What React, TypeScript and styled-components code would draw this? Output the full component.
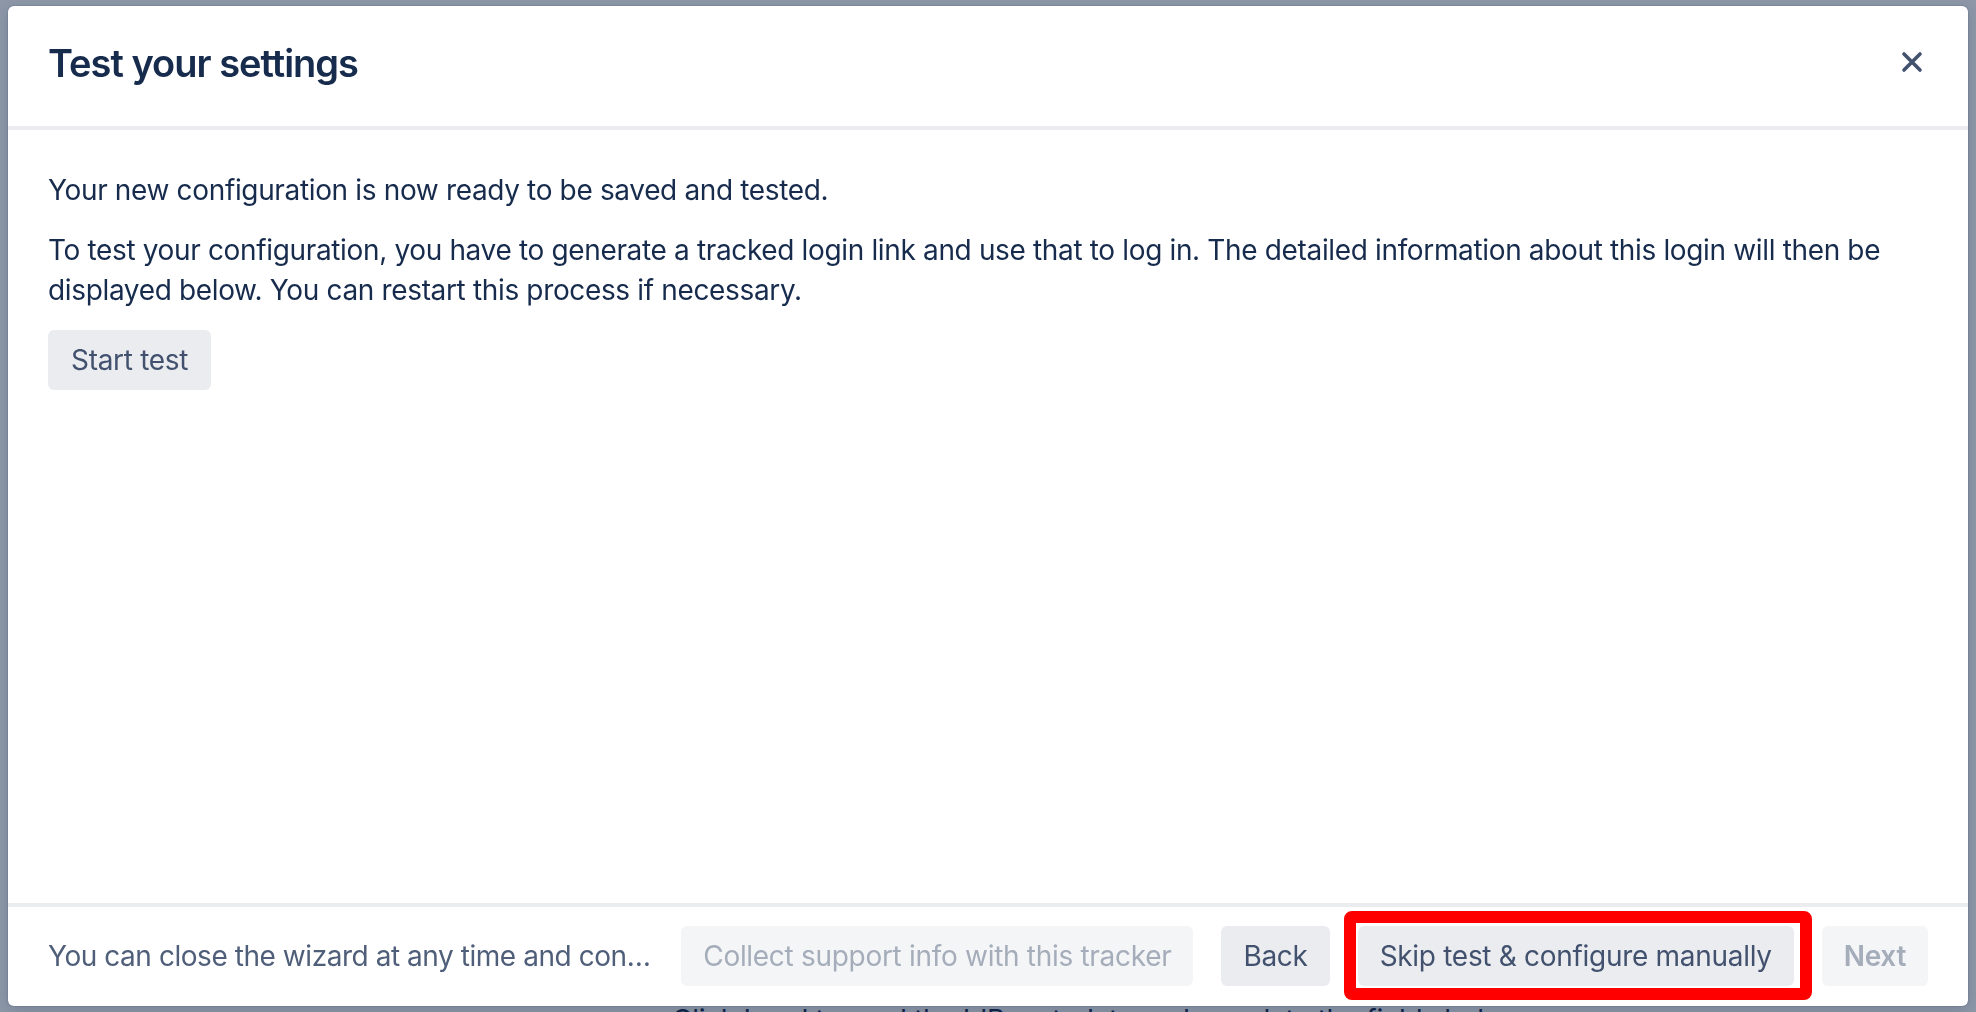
import React from "react";
import styled, { createGlobalStyle } from "styled-components";

const GlobalStyle = createGlobalStyle`
  html, body {
    margin: 0;
    padding: 0;
    background: #ffffff;
    font-family: Inter, "Noto Sans", "Liberation Sans", sans-serif;
    -webkit-font-smoothing: antialiased;
  }
  * { box-sizing: border-box; }
`;

/* ---------- page behind the dialog ---------- */

const Page = styled.div`
  height: 100vh;
  overflow: hidden;
  background: #ffffff;
  display: flex;
  flex-direction: column;
  padding-top: 241px;
`;

const FieldRule = styled.div<{ $gap: number }>`
  height: 2px;
  background: #0052cc;
  margin-bottom: ${(p) => p.$gap}px;
`;

const PageHint = styled.p`
  margin: 0 0 0 672px;
  font-size: 28px;
  line-height: 40px;
  color: #172b4d;
  letter-spacing: -0.3px;
  white-space: nowrap;
`;

/* ---------- dialog ---------- */

const Blanket = styled.div`
  position: fixed;
  inset: 0;
  background: rgba(9, 30, 66, 0.46);
  display: flex;
  padding: 6px 8px;
`;

const Dialog = styled.section`
  flex: 1;
  display: flex;
  flex-direction: column;
  background: #ffffff;
  border-radius: 6px;
  box-shadow: 0 0 0 1px rgba(9, 30, 66, 0.08), 0 4px 16px rgba(9, 30, 66, 0.2);
  overflow: hidden;
`;

const Header = styled.header`
  height: 124px;
  flex: none;
  display: flex;
  align-items: center;
  justify-content: space-between;
  padding: 0 36px 6px 40px;
  border-bottom: 4px solid #ebecf0;
`;

const Title = styled.h1`
  margin: 0;
  font-size: 38px;
  line-height: 1;
  font-weight: 600;
  letter-spacing: -1px;
  color: #172b4d;
`;

const CloseButton = styled.button`
  width: 40px;
  height: 40px;
  border: 0;
  padding: 0;
  background: transparent;
  display: flex;
  align-items: center;
  justify-content: center;
  color: #42526e;
  cursor: pointer;
  margin-top: -2px;
`;

const Body = styled.div`
  flex: 1;
  padding: 40px 40px;
  color: #172b4d;
`;

const Paragraph = styled.p`
  margin: 0 0 20px;
  font-size: 28px;
  line-height: 40px;
  letter-spacing: -0.35px;
`;

const Button = styled.button<{ $disabled?: boolean; $strong?: boolean }>`
  height: 60px;
  flex: none;
  padding: 0 22px;
  border: 0;
  border-radius: 6px;
  font-family: inherit;
  font-size: 28px;
  letter-spacing: -0.3px;
  font-weight: ${(p) => (p.$strong ? 600 : 400)};
  background: ${(p) => (p.$disabled ? "#f4f5f7" : "#ebecf0")};
  color: ${(p) => (p.$disabled ? "#a5adba" : "#42526e")};
  cursor: ${(p) => (p.$disabled ? "not-allowed" : "pointer")};
  white-space: nowrap;
`;

const StartButton = styled(Button)`
  padding: 0 23px;
`;

const Footer = styled.footer`
  flex: none;
  display: flex;
  align-items: center;
  gap: 28px;
  padding: 19px 40px 20px;
  border-top: 4px solid #ebecf0;
`;

const FooterNote = styled.span`
  flex: 1;
  min-width: 0;
  font-size: 28px;
  letter-spacing: -0.45px;
  color: #505f79;
  white-space: nowrap;
  overflow: hidden;
  text-overflow: ellipsis;
`;

const Actions = styled.div`
  display: flex;
  align-items: center;
  gap: 28px;
`;

const Highlight = styled.span`
  position: relative;
  display: inline-flex;
  &::after {
    content: "";
    position: absolute;
    top: -15px;
    bottom: -14px;
    left: -14px;
    right: -18px;
    border: 12px solid #ff0000;
    border-radius: 8px;
    pointer-events: none;
  }
`;

const CloseIcon = () => (
  <svg width="22" height="22" viewBox="0 0 22 22" aria-hidden="true">
    <path
      d="M3 3 L19 19 M19 3 L3 19"
      stroke="currentColor"
      strokeWidth="3.6"
      strokeLinecap="round"
      fill="none"
    />
  </svg>
);

export default function App() {
  return (
    <>
      <GlobalStyle />
      <Page aria-hidden="true">
        <FieldRule $gap={122} />
        <FieldRule $gap={637} />
        <PageHint>Click Load to read the IdP metadata and populate the fields below.</PageHint>
      </Page>
      <Blanket>
        <Dialog role="dialog" aria-labelledby="dlg-title">
          <Header>
            <Title id="dlg-title">Test your settings</Title>
            <CloseButton aria-label="Close">
              <CloseIcon />
            </CloseButton>
          </Header>
          <Body>
            <Paragraph>Your new configuration is now ready to be saved and tested.</Paragraph>
            <Paragraph>
              To test your configuration, you have to generate a tracked login link and use that to log in. The
              detailed information about this login will then be displayed below. You can restart this process if
              necessary.
            </Paragraph>
            <StartButton>Start test</StartButton>
          </Body>
          <Footer>
            <FooterNote>
              You can close the wizard at any time and continue later from where you left off.
            </FooterNote>
            <Actions>
              <Button $disabled>Collect support info with this tracker</Button>
              <Button>Back</Button>
              <Highlight>
                <Button>Skip test &amp; configure manually</Button>
              </Highlight>
              <Button $disabled $strong>
                Next
              </Button>
            </Actions>
          </Footer>
        </Dialog>
      </Blanket>
    </>
  );
}
